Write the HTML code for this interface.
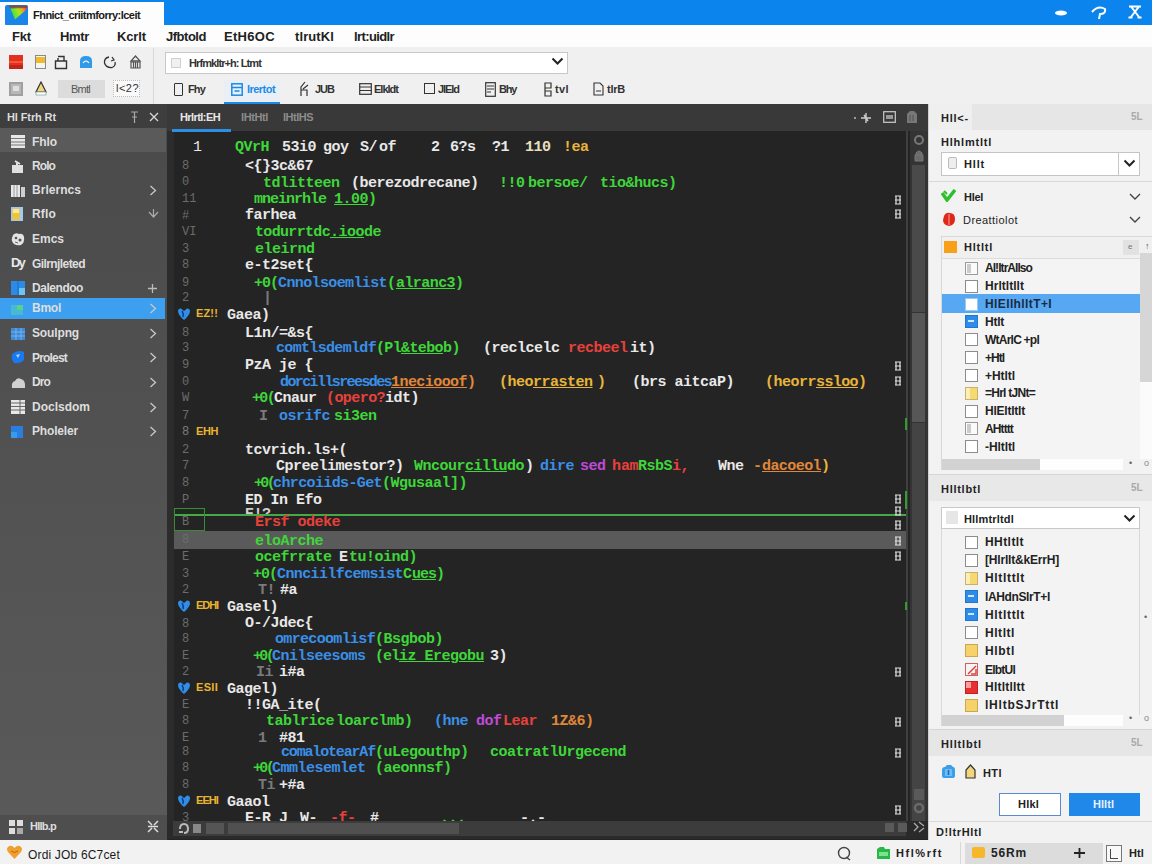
<!DOCTYPE html><html><head><meta charset="utf-8">
<style>
*{margin:0;padding:0;box-sizing:border-box}
html,body{width:1152px;height:864px;overflow:hidden;background:#f0f0f0;font-family:"Liberation Sans",sans-serif}
.a{position:absolute}
.t{position:absolute;white-space:pre;line-height:1}
#title{left:0;top:0;width:1152px;height:25px;background:#0b84ee}
#tab{left:0;top:2px;width:164px;height:23px;background:#fdfdfd}
#menu{left:0;top:25px;width:1152px;height:22px;background:#fdfdfd}
#tool{left:0;top:47px;width:1152px;height:57px;background:#f0f0f0}
#side{left:0;top:104px;width:167px;height:736px;background:linear-gradient(#4a4a4a,#5a5a5a)}
#edit{left:167px;top:104px;width:761px;height:736px;background:#242424}
#right{left:928px;top:104px;width:224px;height:736px;background:#f2f2f2}
#status{left:0;top:840px;width:1152px;height:24px;background:#f2f2f2}
.code{font-family:"Liberation Mono",monospace;font-size:15px;font-weight:bold;letter-spacing:-0.5px}
.side{font-size:12px;font-weight:bold;color:#dedede}
.dk{font-size:12px;font-weight:bold;color:#222}
.g{color:#3fd63a}.w{color:#e8e8e8}.b{color:#3a8fe8}.r{color:#e8413c}.y{color:#e8b53a}.o{color:#e0873a}.p{color:#c04ad8}.n{color:#7a7a7a}.c{color:#e8e0c0}
.u{text-decoration:underline}
</style></head><body>

<div id="title" class="a"></div>
<div id="tab" class="a"></div>
<svg class="a" style="left:5px;top:5px" width="23" height="21" viewBox="0 0 23 21">
<defs><linearGradient id="lg" x1="0" y1="0.3" x2="1" y2="0"><stop offset="0" stop-color="#3ae040"></stop><stop offset="0.45" stop-color="#a8e818"></stop><stop offset="0.7" stop-color="#f0a020"></stop><stop offset="1" stop-color="#e03040"></stop></linearGradient></defs>
<rect x="0" y="0" width="23" height="21" rx="2" fill="#1a84e8"></rect>
<path d="M5 2.5 L22 1.5 L21 5 L10 14.5 Z" fill="url(#lg)"></path>
<path d="M4 0.5 H22.5 L22 3 L5 3.5Z" fill="#8a3a3a" opacity="0.75"></path>
</svg>
<div class="t" style="left: 33px; top: 10px; font-size: 11px; font-weight: bold; color: rgb(26, 26, 26); letter-spacing: -0.53px;">Fhnict_criitmforry:lceit</div>
<svg class="a" style="left:1053px;top:9px" width="16" height="8"><ellipse cx="8" cy="4" rx="6" ry="2.6" fill="#fff"></ellipse></svg>
<svg class="a" style="left:1090px;top:4px" width="18" height="16"><path d="M2 8 Q8 1 15 5 Q16 10 10 10 L9 15" stroke="#fff" stroke-width="2" fill="none"></path></svg>
<svg class="a" style="left:1127px;top:4px" width="16" height="16"><path d="M2 2.5 H14 M4 2.5 L12 13 M12 2.5 L4 13 M1.5 13.5 H5.5 M10.5 13.5 H14.5" stroke="#fff" stroke-width="2" fill="none"></path></svg>
<div id="menu" class="a"></div>
<div class="t dk" style="left: 12px; top: 30px; font-size: 13px; letter-spacing: -0.17px;">Fkt</div>
<div class="t dk" style="left: 60px; top: 30px; font-size: 13px; letter-spacing: -0.34px;">Hmtr</div>
<div class="t dk" style="left: 117px; top: 30px; font-size: 13px; letter-spacing: -0.13px;">Kcrlt</div>
<div class="t dk" style="left: 166px; top: 30px; font-size: 13px; letter-spacing: -0.48px;">Jfbtold</div>
<div class="t dk" style="left: 224px; top: 30px; font-size: 13px; letter-spacing: 0.31px;">EtH6OC</div>
<div class="t dk" style="left: 295px; top: 30px; font-size: 13px; letter-spacing: 0.1px;">tlrutKl</div>
<div class="t dk" style="left: 354px; top: 30px; font-size: 13px; letter-spacing: -0.61px;">lrt:uidlr</div>
<div id="tool" class="a"></div>
<!-- toolbar icons row1 -->
<div class="a" style="left:9px;top:55px;width:14px;height:14px;background:#e2321e;border-bottom:4px solid #c42418"></div>
<div class="a" style="left:9px;top:61px;width:14px;height:2px;background:#f05a3a"></div>
<div class="a" style="left:35px;top:55px;width:11px;height:14px;background:#f4f4f4;border:1px solid #8a8a8a"></div>
<div class="a" style="left:36px;top:57px;width:9px;height:6px;background:#f2b92a"></div>
<svg class="a" style="left:54px;top:55px" width="14" height="15"><path d="M4 1.5 H10 V6 M1.5 6 H12.5 V13.5 H1.5Z M4 6 V3" stroke="#333" stroke-width="1.4" fill="none"></path></svg>
<svg class="a" style="left:79px;top:55px" width="14" height="14"><path d="M1 13 V6 Q1 1 7 1 Q13 1 13 6 V13Z" fill="#2f9ae8"></path><path d="M4 8 Q7 4 10 8" stroke="#fff" stroke-width="1.2" fill="none"></path></svg>
<svg class="a" style="left:103px;top:55px" width="14" height="14"><path d="M6 2 Q1 3 1.5 8 Q3 13 9 12.5 Q13 11 12 7 M9 2 L11 5 L8 6" stroke="#333" stroke-width="1.3" fill="none"></path></svg>
<svg class="a" style="left:129px;top:55px" width="13" height="14"><path d="M6.5 1 L2 6 H11Z" fill="none" stroke="#555" stroke-width="1.3"></path><path d="M2 7 H11 V13 H2Z M4.5 7 V13 M6.5 7 V13 M8.5 7 V13" stroke="#555" stroke-width="1.2" fill="none"></path></svg>
<!-- row2 -->
<div class="a" style="left:9px;top:82px;width:14px;height:14px;background:#b8b8b8;border:2px solid #a0a0a0"></div>
<div class="a" style="left:13px;top:86px;width:6px;height:5px;background:#e0e0e0"></div>
<svg class="a" style="left:35px;top:81px" width="12" height="15"><path d="M6 1 L1 11 H11Z" fill="#f2d67a" stroke="#333" stroke-width="1.2"></path><rect x="1" y="11" width="10" height="3" fill="#fff" stroke="#8aa" stroke-width="0.8"></rect></svg>
<div class="a" style="left:58px;top:80px;width:47px;height:18px;background:#dcdcdc"></div>
<div class="t" style="left: 71px; top: 84px; font-size: 11px; color: rgb(85, 85, 85); letter-spacing: -0.75px;">Bmtl</div>
<div class="a" style="left:113px;top:80px;width:27px;height:17px;background:#fafafa;border:1px dotted #bbb"></div>
<div class="t" style="left: 116px; top: 83px; font-size: 11px; color: rgb(51, 51, 51); letter-spacing: 0.47px;">l&lt;2?</div>
<div class="a" style="left:153px;top:48px;width:1px;height:56px;background:#d8d8d8"></div>
<!-- search -->
<div class="a" style="left:165px;top:52px;width:403px;height:22px;background:#fff;border:1px solid #c8c8c8"></div>
<div class="a" style="left:171px;top:58px;width:10px;height:10px;background:#f0f0f0;border:1px solid #d0d0d0"></div>
<div class="t" style="left: 189px; top: 58px; font-size: 11px; font-weight: bold; color: rgb(51, 51, 51); letter-spacing: -0.91px;">Hrfmkltr+h: Ltmt</div>
<svg class="a" style="left:551px;top:57px" width="13" height="9"><path d="M1.5 1.5 L6.5 6.5 L11.5 1.5" stroke="#222" stroke-width="2" fill="none"></path></svg>
<!-- tabs row -->
<div class="a" style="left:224px;top:80px;width:56px;height:22px;background:#e9eff5"></div>
<div class="a" style="left:224px;top:102px;width:56px;height:2px;background:#1a8ae8"></div>
<div class="a" style="left:174px;top:83px;width:9px;height:13px;border:1.3px solid #333;border-radius:1px"></div>
<div class="t" style="left: 188px; top: 84px; font-size: 11px; color: rgb(51, 51, 51); font-weight: bold; letter-spacing: -0.85px;">Fhy</div>
<svg class="a" style="left:231px;top:83px" width="12" height="13"><rect x="0.8" y="0.8" width="10.4" height="11.4" fill="none" stroke="#1a8ae8" stroke-width="1.5"></rect><path d="M1 4.5 H11 M3.5 8 H8.5" stroke="#1a8ae8" stroke-width="1.4"></path></svg>
<div class="t" style="left: 247px; top: 84px; font-size: 11px; color: rgb(26, 138, 232); font-weight: bold; letter-spacing: -0.54px;">lrertot</div>
<svg class="a" style="left:299px;top:81px" width="11" height="16"><path d="M6 1 L2 6 V15 M9 4 L4 8 M2 9 H8 V15" stroke="#333" stroke-width="1.2" fill="none"></path></svg>
<div class="t" style="left: 315px; top: 84px; font-size: 11px; color: rgb(51, 51, 51); font-weight: bold; letter-spacing: -1.01px;">JUB</div>
<svg class="a" style="left:359px;top:83px" width="13" height="12"><rect x="0.7" y="0.7" width="11.6" height="10.6" fill="none" stroke="#333" stroke-width="1.2"></rect><path d="M1 4 H12 M1 7.5 H12" stroke="#333" stroke-width="1.2"></path></svg>
<div class="t" style="left: 374px; top: 84px; font-size: 11px; color: rgb(51, 51, 51); font-weight: bold; letter-spacing: -0.99px;">Elkldt</div>
<div class="a" style="left:424px;top:83px;width:11px;height:11px;border:1.2px solid #333"></div>
<div class="t" style="left: 438px; top: 84px; font-size: 11px; color: rgb(51, 51, 51); font-weight: bold; letter-spacing: -1.06px;">JlEld</div>
<svg class="a" style="left:485px;top:82px" width="11" height="15"><rect x="0.7" y="0.7" width="9.6" height="13.6" fill="none" stroke="#333" stroke-width="1.2"></rect><path d="M2 4 H9 M2 7 H9 M2 10 H6" stroke="#333" stroke-width="1.1"></path></svg>
<div class="t" style="left: 499px; top: 84px; font-size: 11px; color: rgb(51, 51, 51); font-weight: bold; letter-spacing: -1.26px;">Bhy</div>
<svg class="a" style="left:543px;top:82px" width="10" height="15"><path d="M2 1 H8 V6 H2Z M2 6 V14 H8 V9 H2" stroke="#333" stroke-width="1.2" fill="none"></path></svg>
<div class="t" style="left: 555px; top: 84px; font-size: 11px; color: rgb(51, 51, 51); font-weight: bold; letter-spacing: 0.39px;">tvl</div>
<svg class="a" style="left:593px;top:82px" width="11" height="14"><path d="M1 1 H7 L10 4 V13 H1Z M3 9 H8" stroke="#333" stroke-width="1.1" fill="none"></path></svg>
<div class="t" style="left: 607px; top: 84px; font-size: 11px; color: rgb(51, 51, 51); font-weight: bold; letter-spacing: -0.24px;">tlrB</div>
<div id="side" class="a"></div>
<div class="a" style="left:0;top:104px;width:167px;height:24px;background:#3e3e3e"></div>
<div class="t side" style="left: 7px; top: 112px; font-size: 11px; color: rgb(220, 220, 220); letter-spacing: -0.11px;">Hl Ftrh Rt</div>
<svg class="a" style="left:130px;top:111px" width="9" height="13"><path d="M1 1H8M4.5 1V12M2 6H7" stroke="#aaa" stroke-width="1.2"></path></svg>
<svg class="a" style="left:149px;top:112px" width="10" height="10"><path d="M1 1L9 9M9 1L1 9" stroke="#d8d8d8" stroke-width="1.3"></path></svg>
<div class="a" style="left:0;top:128px;width:166px;height:24px;background:#5a5a5a"></div>
<div class="a" style="left:0;top:298px;width:165px;height:21px;background:#3d9ff0"></div>
<div class="a" style="left:11px;top:134px"><svg width="14" height="13"><rect x="0" y="0" width="14" height="13" fill="#e8e8e8"></rect><path d="M0 3.5H14M0 7H14M0 10H14" stroke="#777" stroke-width="1.2"></path></svg></div>
<div class="t side" style="left: 32px; top: 136px; letter-spacing: -0.08px;">Fhlo</div>
<div class="a" style="left:11px;top:159px"><svg width="13" height="13"><path d="M1 5H12V13H1Z" fill="#e0e0e0"></path><path d="M4 1L9 4M6 3V5" stroke="#e0e0e0" stroke-width="2"></path></svg></div>
<div class="t side" style="left: 32px; top: 160px; letter-spacing: -0.92px;">Rolo</div>
<div class="a" style="left:11px;top:183px"><svg width="14" height="13"><rect x="0" y="1" width="9" height="12" fill="#e8e8e8"></rect><rect x="10" y="3" width="4" height="10" fill="#cfcfcf"></rect><path d="M3 1V13M6 1V13" stroke="#888" stroke-width="0.8"></path></svg></div>
<div class="t side" style="left: 32px; top: 184px; letter-spacing: 0.04px;">Brlerncs</div>
<svg class="a" style="left:149px;top:185px" width="8" height="11"><path d="M1.5 1L6.5 5.5L1.5 10" stroke="#c8c8c8" stroke-width="1.3" fill="none"></path></svg>
<div class="a" style="left:11px;top:207px"><svg width="12" height="14"><rect x="0" y="0" width="12" height="14" fill="#a8c8e8"></rect><rect x="1.5" y="1.5" width="7" height="11" fill="#f2c52a"></rect><rect x="2" y="2" width="6" height="4" fill="#f8e8a0"></rect></svg></div>
<div class="t side" style="left: 32px; top: 208px; letter-spacing: 0.17px;">Rflo</div>
<svg class="a" style="left:148px;top:209px" width="11" height="10"><path d="M1 3L5.5 8L10 3M5.5 0V8" stroke="#aaa" stroke-width="1.2" fill="none"></path></svg>
<div class="a" style="left:11px;top:232px"><svg width="14" height="14"><path d="M2 3Q5 0 8 2Q12 1 13 5Q14 10 10 13Q6 14 3 12Q0 9 1 6Z" fill="#e4e4e4"></path><circle cx="5" cy="6" r="1.3" fill="#555"></circle><circle cx="9" cy="8" r="1.5" fill="#555"></circle><path d="M4 10L7 11" stroke="#666" stroke-width="1"></path></svg></div>
<div class="t side" style="left: 32px; top: 233px; letter-spacing: -0.01px;">Emcs</div>
<div class="a" style="left:11px;top:256px"><div style="font-size:13px;font-weight:bold;color:#e8e8e8;letter-spacing:-2px;line-height:14px">Dy</div></div>
<div class="t side" style="left: 32px; top: 258px; letter-spacing: -0.58px;">Gilrnjleted</div>
<div class="a" style="left:11px;top:281px"><svg width="14" height="14"><rect width="14" height="14" fill="#2a8ce8"></rect><rect x="8" y="7" width="6" height="7" fill="#6cc4f4"></rect><path d="M7 0V14" stroke="#1a6cc0" stroke-width="1"></path></svg></div>
<div class="t side" style="left: 32px; top: 282px; letter-spacing: -0.46px;">Dalendoo</div>
<svg class="a" style="left:147px;top:283px" width="11" height="11"><path d="M5.5 1V10M1 5.5H10" stroke="#bbb" stroke-width="1.3"></path></svg>
<div class="a" style="left:11px;top:301px"><svg width="12" height="10"><rect width="12" height="10" fill="#48c0c8" opacity="0.8"></rect><rect x="6" y="0" width="6" height="5" fill="#5ad08a"></rect></svg></div>
<div class="t side" style="left: 32px; top: 302px; letter-spacing: -0.25px;">Bmol</div>
<svg class="a" style="left:149px;top:303px" width="8" height="11"><path d="M1.5 1L6.5 5.5L1.5 10" stroke="#c8c8c8" stroke-width="1.3" fill="none"></path></svg>
<div class="a" style="left:11px;top:326px"><svg width="14" height="12"><rect width="14" height="12" fill="#3c8ad8"></rect><path d="M0 4H14M0 8H14M5 0V12M10 0V12" stroke="#8ab8e8" stroke-width="0.8"></path></svg></div>
<div class="t side" style="left: 32px; top: 327px; letter-spacing: -0.14px;">Soulpng</div>
<svg class="a" style="left:149px;top:328px" width="8" height="11"><path d="M1.5 1L6.5 5.5L1.5 10" stroke="#c8c8c8" stroke-width="1.3" fill="none"></path></svg>
<div class="a" style="left:11px;top:350px"><svg width="14" height="14"><path d="M1 4Q7 -1 13 2V10Q9 14 3 13Q0 10 1 4Z" fill="#1a78f0"></path><path d="M5 5L9 4L7 8Z" fill="#a8d8ff"></path></svg></div>
<div class="t side" style="left: 32px; top: 352px; letter-spacing: -0.81px;">Prolest</div>
<svg class="a" style="left:149px;top:352px" width="8" height="11"><path d="M1.5 1L6.5 5.5L1.5 10" stroke="#c8c8c8" stroke-width="1.3" fill="none"></path></svg>
<div class="a" style="left:11px;top:375px"><svg width="14" height="12"><path d="M1 11Q0 5 4 4Q6 0 10 2Q14 3 14 8V11Z" fill="#d0d0d0"></path></svg></div>
<div class="t side" style="left: 32px; top: 376px; letter-spacing: -0.89px;">Dro</div>
<svg class="a" style="left:149px;top:377px" width="8" height="11"><path d="M1.5 1L6.5 5.5L1.5 10" stroke="#c8c8c8" stroke-width="1.3" fill="none"></path></svg>
<div class="a" style="left:11px;top:400px"><svg width="14" height="14"><rect width="14" height="14" fill="#e8e8e8"></rect><path d="M0 3H14M0 6.5H14M0 10H14M9 0V14" stroke="#666" stroke-width="1"></path></svg></div>
<div class="t side" style="left: 32px; top: 401px; letter-spacing: 0px;">Doclsdom</div>
<svg class="a" style="left:149px;top:402px" width="8" height="11"><path d="M1.5 1L6.5 5.5L1.5 10" stroke="#c8c8c8" stroke-width="1.3" fill="none"></path></svg>
<div class="a" style="left:11px;top:424px"><svg width="12" height="12"><rect width="12" height="12" fill="#2a7ee0"></rect><rect x="0" y="6" width="6" height="6" fill="#3a9af0"></rect></svg></div>
<div class="t side" style="left: 32px; top: 425px; letter-spacing: -0.17px;">Pholeler</div>
<svg class="a" style="left:149px;top:426px" width="8" height="11"><path d="M1.5 1L6.5 5.5L1.5 10" stroke="#c8c8c8" stroke-width="1.3" fill="none"></path></svg>
<div class="a" style="left:0;top:815px;width:167px;height:25px;background:#4e4e4e"></div>
<svg class="a" style="left:9px;top:820px" width="14" height="14"><rect x="0" y="0" width="6" height="6" fill="#ddd"></rect><rect x="8" y="0" width="6" height="6" fill="#ddd"></rect><rect x="0" y="8" width="6" height="6" fill="#ddd"></rect><rect x="8" y="8" width="6" height="6" fill="#aaa"></rect></svg>
<div class="t side" style="left: 30px; top: 821px; font-size: 11px; letter-spacing: -0.76px;">Hllb.p</div>
<svg class="a" style="left:147px;top:820px" width="12" height="13"><path d="M1 1L5 5M11 1L7 5M1 12L5 8M11 12L7 8M1 6.5H11" stroke="#ddd" stroke-width="1.5"></path></svg>
<div id="edit" class="a"></div>
<div class="a" style="left:167px;top:104px;width:761px;height:27px;background:#393939"></div>
<div class="a" style="left:167px;top:131px;width:7px;height:708px;background:#2c2c2c"></div>
<div class="t" style="left: 180px; top: 112px; font-size: 11px; font-weight: bold; color: rgb(232, 232, 232); letter-spacing: -0.58px;">Hrlrtl:EH</div>
<div class="a" style="left:172px;top:129px;width:59px;height:3px;background:#2d8fe0"></div>
<div class="t" style="left: 241px; top: 112px; font-size: 11px; font-weight: bold; color: rgb(140, 140, 140); letter-spacing: -0.39px;">lHtHtl</div>
<div class="t" style="left: 283px; top: 112px; font-size: 11px; font-weight: bold; color: rgb(140, 140, 140); letter-spacing: -0.5px;">lHtlHS</div>
<svg class="a" style="left:853px;top:112px" width="20" height="12"><circle cx="2" cy="6" r="1" fill="#bbb"></circle><path d="M8 6H18M13 1V11M11 3L15 9" stroke="#ccc" stroke-width="1.4"></path></svg>
<svg class="a" style="left:883px;top:111px" width="13" height="12"><rect x="0.7" y="0.7" width="11.6" height="10.6" fill="none" stroke="#ccc" stroke-width="1.2"></rect><rect x="3" y="4" width="7" height="4" fill="#999"></rect></svg>
<svg class="a" style="left:906px;top:110px" width="12" height="14"><path d="M1 13V4L4 1H8L11 4V13Z" fill="#777"></path><path d="M4 5V11M7 5V11" stroke="#555" stroke-width="1"></path></svg>
<div class="a" style="left:174px;top:531px;width:732px;height:18px;background:#5a5a5a"></div>
<div class="a" style="left:174px;top:514px;width:732px;height:1.5px;background:#46a846"></div>
<div class="a" style="left:174px;top:508px;width:31px;height:6px;background:#1e2a1e"></div>
<div class="a" style="left:174px;top:508px;width:31px;height:23px;border:1px solid #3a8a3a"></div>
<div class="a" style="left:906px;top:131px;width:1.5px;height:690px;background:#404040"></div>
<div class="a" style="left:905px;top:418px;width:2px;height:12px;background:#2fa02f"></div>
<div class="a" style="left:905px;top:491px;width:2px;height:18px;background:#2fa02f"></div>
<div class="a" style="left:905px;top:602px;width:2px;height:8px;background:#2fa02f"></div>
<div class="a" style="left:910px;top:131px;width:18px;height:708px;background:#343434"></div>
<div class="a" style="left:912px;top:165px;width:13px;height:147px;background:#4a4a4a"></div>
<div class="a" style="left:912px;top:312px;width:13px;height:111px;background:#575757;border-top:1px solid #333;border-bottom:1px solid #333"></div>
<div class="a" style="left:912px;top:423px;width:13px;height:398px;background:#444"></div>
<svg class="a" style="left:913px;top:134px" width="12" height="12"><circle cx="6" cy="6" r="4" fill="none" stroke="#777" stroke-width="2"></circle></svg>
<svg class="a" style="left:913px;top:149px" width="12" height="13"><path d="M3 6V4Q6 0 9 4V6M2 6H10V12H2Z" fill="#6a6a6a" stroke="#777" stroke-width="1"></path></svg>
<svg class="a" style="left:913px;top:788px" width="12" height="13"><rect x="1" y="1" width="10" height="11" fill="#5a5a5a"></rect></svg>
<svg class="a" style="left:913px;top:802px" width="12" height="12"><circle cx="6" cy="6" r="4" fill="none" stroke="#6a6a6a" stroke-width="2.5"></circle></svg>
<div class="t code w" style="left:193px;top:140px;font-weight:normal">1</div>
<div class="t code g" style="left:235px;top:140px;letter-spacing:-0.50px">QVrH</div>
<div class="t code w" style="left:282px;top:140px;letter-spacing:-0.50px">53i0</div>
<div class="t code w" style="left:323px;top:140px;letter-spacing:-0.50px">goy</div>
<div class="t code w" style="left:360px;top:140px;letter-spacing:-0.50px">S/</div>
<div class="t code w" style="left:379px;top:140px;letter-spacing:-0.50px">of</div>
<div class="t code w" style="left:431px;top:140px;letter-spacing:-0.50px">2</div>
<div class="t code w" style="left:450px;top:140px;letter-spacing:-0.50px">6?s</div>
<div class="t code w" style="left:492px;top:140px;letter-spacing:-0.50px">?1</div>
<div class="t code c" style="left:525px;top:140px;letter-spacing:-0.50px">110</div>
<div class="t code y" style="left:563px;top:140px;letter-spacing:-0.50px">!ea</div>
<div class="t" style="left:182px;top:160px;font-family:'Liberation Mono',monospace;font-size:12px;color:#6c6c6c">8</div>
<div class="t code w" style="left:245px;top:159px;letter-spacing:-0.50px">&lt;{}3c&amp;67</div>
<div class="t" style="left:182px;top:176px;font-family:'Liberation Mono',monospace;font-size:12px;color:#6c6c6c">0</div>
<div class="t code g" style="left:263px;top:176px;letter-spacing:-0.50px">tdlitteen</div>
<div class="t code w" style="left:351px;top:176px;letter-spacing:-0.50px">(berezodrecane)</div>
<div class="t code g" style="left:499px;top:176px;letter-spacing:-0.50px">!!0</div>
<div class="t code g" style="left:528px;top:176px;letter-spacing:-0.50px">bersoe/</div>
<div class="t code g" style="left:600px;top:176px;letter-spacing:-0.50px">tio&amp;hucs)</div>
<div class="t" style="left:182px;top:193px;font-family:'Liberation Mono',monospace;font-size:12px;color:#6c6c6c">11</div>
<div class="t code g" style="left:254px;top:192px;letter-spacing:-1.00px">mneinrhle </div>
<div class="t code g u" style="left:334px;top:192px;letter-spacing:-0.50px">1.00</div>
<div class="t code g" style="left:368px;top:192px;letter-spacing:-0.50px">)</div>
<div class="t" style="left:182px;top:210px;font-family:'Liberation Mono',monospace;font-size:12px;color:#6c6c6c">#</div>
<div class="t code w" style="left:245px;top:208px;letter-spacing:-0.50px">farhea</div>
<div class="t" style="left:182px;top:226px;font-family:'Liberation Mono',monospace;font-size:12px;color:#6c6c6c">VI</div>
<div class="t code g" style="left:255px;top:225px;letter-spacing:-0.67px">todurrtdc</div>
<div class="t code g u" style="left:330px;top:225px;letter-spacing:-0.50px">.ioo</div>
<div class="t code g" style="left:364px;top:225px;letter-spacing:-0.50px">de</div>
<div class="t" style="left:182px;top:243px;font-family:'Liberation Mono',monospace;font-size:12px;color:#6c6c6c">3</div>
<div class="t code g" style="left:255px;top:242px;letter-spacing:-0.50px">eleirnd</div>
<div class="t" style="left:182px;top:259px;font-family:'Liberation Mono',monospace;font-size:12px;color:#6c6c6c">8</div>
<div class="t code w" style="left:245px;top:258px;letter-spacing:-0.50px">e-t2set{</div>
<div class="t" style="left:182px;top:277px;font-family:'Liberation Mono',monospace;font-size:12px;color:#6c6c6c">9</div>
<div class="t code g" style="left:254px;top:276px;letter-spacing:-1.00px">+0(</div>
<div class="t code b" style="left:278px;top:276px;letter-spacing:-0.62px">Cnnolsoemlist</div>
<div class="t code g" style="left:387px;top:276px;letter-spacing:-0.50px">(</div>
<div class="t code g u" style="left:396px;top:276px;letter-spacing:-0.57px">alranc3</div>
<div class="t code g" style="left:455px;top:276px;letter-spacing:-0.50px">)</div>
<div class="t" style="left:182px;top:292px;font-family:'Liberation Mono',monospace;font-size:12px;color:#6c6c6c">2</div>
<div class="t code n" style="left:263px;top:291px;letter-spacing:-0.50px">|</div>
<div class="t code w" style="left:227px;top:308px;letter-spacing:-0.50px">Gaea)</div>
<div class="t" style="left:182px;top:327px;font-family:'Liberation Mono',monospace;font-size:12px;color:#6c6c6c">8</div>
<div class="t code w" style="left:245px;top:326px;letter-spacing:-0.50px">L1n/=&amp;s{</div>
<div class="t" style="left:182px;top:342px;font-family:'Liberation Mono',monospace;font-size:12px;color:#6c6c6c">3</div>
<div class="t code b" style="left:276px;top:341px;letter-spacing:-0.67px">comtlsdemldf</div>
<div class="t code g" style="left:376px;top:341px;letter-spacing:-0.67px">(Pl</div>
<div class="t code g u" style="left:401px;top:341px;letter-spacing:-0.60px">&amp;tebo</div>
<div class="t code g" style="left:443px;top:341px;letter-spacing:-0.50px">b)</div>
<div class="t code w" style="left:483px;top:341px;letter-spacing:-0.50px">(reclcelc</div>
<div class="t code r" style="left:568px;top:341px;letter-spacing:-0.50px">recbeel</div>
<div class="t code w" style="left:630px;top:341px;letter-spacing:-0.50px">it)</div>
<div class="t" style="left:182px;top:359px;font-family:'Liberation Mono',monospace;font-size:12px;color:#6c6c6c">9</div>
<div class="t code w" style="left:245px;top:358px;letter-spacing:-0.50px">PzA je {</div>
<div class="t" style="left:182px;top:376px;font-family:'Liberation Mono',monospace;font-size:12px;color:#6c6c6c">0</div>
<div class="t code b" style="left:280px;top:375px;letter-spacing:-1.60px">dorcillsreesdes</div>
<div class="t code o u" style="left:391px;top:375px;letter-spacing:-0.56px">1neciooof</div>
<div class="t code o" style="left:467px;top:375px;letter-spacing:-0.50px">)</div>
<div class="t code y" style="left:499px;top:375px;letter-spacing:-0.50px">(heo</div>
<div class="t code y u" style="left:533px;top:375px;letter-spacing:-0.50px">rrasten</div>
<div class="t code y" style="left:597px;top:375px;letter-spacing:-0.50px">)</div>
<div class="t code w" style="left:632px;top:375px;letter-spacing:-0.50px">(brs aitcaP)</div>
<div class="t code y" style="left:765px;top:375px;letter-spacing:-0.50px">(heorr</div>
<div class="t code y u" style="left:816px;top:375px;letter-spacing:-0.60px">ssloo</div>
<div class="t code y" style="left:858px;top:375px;letter-spacing:-0.50px">)</div>
<div class="t" style="left:182px;top:392px;font-family:'Liberation Mono',monospace;font-size:12px;color:#6c6c6c">W</div>
<div class="t code g" style="left:252px;top:391px;letter-spacing:-1.67px">+0(</div>
<div class="t code w" style="left:274px;top:391px;letter-spacing:-0.50px">Cnaur</div>
<div class="t code r" style="left:326px;top:391px;letter-spacing:-0.57px">(opero?</div>
<div class="t code w" style="left:385px;top:391px;letter-spacing:-0.50px">idt)</div>
<div class="t" style="left:182px;top:410px;font-family:'Liberation Mono',monospace;font-size:12px;color:#6c6c6c">7</div>
<div class="t code n" style="left:259px;top:409px;letter-spacing:-0.50px">I</div>
<div class="t code b" style="left:279px;top:409px;letter-spacing:-0.50px">osrifc</div>
<div class="t code g" style="left:334px;top:409px;letter-spacing:-0.50px">si3en</div>
<div class="t" style="left:182px;top:444px;font-family:'Liberation Mono',monospace;font-size:12px;color:#6c6c6c">2</div>
<div class="t code w" style="left:245px;top:443px;letter-spacing:-0.50px">tcvrich.ls+(</div>
<div class="t" style="left:182px;top:460px;font-family:'Liberation Mono',monospace;font-size:12px;color:#6c6c6c">7</div>
<div class="t code w" style="left:276px;top:459px;letter-spacing:-0.50px">Cpreelimestor?)</div>
<div class="t code g" style="left:414px;top:459px;letter-spacing:-0.50px">Wncour</div>
<div class="t code g u" style="left:465px;top:459px;letter-spacing:-0.60px">cillu</div>
<div class="t code g" style="left:507px;top:459px;letter-spacing:-0.50px">do</div>
<div class="t code w" style="left:525px;top:459px;letter-spacing:-0.50px">)</div>
<div class="t code b" style="left:540px;top:459px;letter-spacing:-0.50px">dire</div>
<div class="t code p" style="left:580px;top:459px;letter-spacing:-0.50px">sed</div>
<div class="t code r" style="left:612px;top:459px;letter-spacing:-0.50px">h</div>
<div class="t code r" style="left:621px;top:459px;letter-spacing:-0.50px">am</div>
<div class="t code g" style="left:638px;top:459px;letter-spacing:-0.50px">RsbS</div>
<div class="t code r" style="left:672px;top:459px;letter-spacing:-0.50px">i,</div>
<div class="t code w" style="left:718px;top:459px;letter-spacing:-0.50px">Wne</div>
<div class="t code o" style="left:753px;top:459px;letter-spacing:-0.50px">-</div>
<div class="t code o u" style="left:762px;top:459px;letter-spacing:-0.57px">dacoeol</div>
<div class="t code y" style="left:821px;top:459px;letter-spacing:-0.50px">)</div>
<div class="t" style="left:182px;top:477px;font-family:'Liberation Mono',monospace;font-size:12px;color:#6c6c6c">8</div>
<div class="t code g" style="left:254px;top:476px;letter-spacing:-2.67px">+0(</div>
<div class="t code b" style="left:273px;top:476px;letter-spacing:-0.62px">chrcoiids-Get</div>
<div class="t code g" style="left:382px;top:476px;letter-spacing:-0.50px">(Wgusaal])</div>
<div class="t" style="left:182px;top:494px;font-family:'Liberation Mono',monospace;font-size:12px;color:#6c6c6c">P</div>
<div class="t code w" style="left:245px;top:493px;letter-spacing:-0.50px">ED In Efo</div>
<div class="a" style="left:240px;top:506px;width:40px;height:8px;overflow:hidden"><div class="t code w" style="left:5px;top:1px;letter-spacing:-0.50px;color:#cfcfcf">E!?</div></div>
<div class="t" style="left:182px;top:516px;font-family:'Liberation Mono',monospace;font-size:12px;color:#6c6c6c">B</div>
<div class="t code r" style="left:255px;top:515px;letter-spacing:-0.50px">Ersf odeke</div>
<div class="t" style="left:182px;top:534px;font-family:'Liberation Mono',monospace;font-size:12px;color:#6c6c6c">8</div>
<div class="t code g" style="left:255px;top:534px;letter-spacing:-0.50px">eloArche</div>
<div class="t" style="left:182px;top:551px;font-family:'Liberation Mono',monospace;font-size:12px;color:#6c6c6c">E</div>
<div class="t code g" style="left:255px;top:550px;letter-spacing:-0.50px">ocefrrate</div>
<div class="t code w" style="left:339px;top:550px;letter-spacing:-0.50px">E</div>
<div class="t code g" style="left:349px;top:550px;letter-spacing:-0.50px">tu!oind)</div>
<div class="t" style="left:182px;top:568px;font-family:'Liberation Mono',monospace;font-size:12px;color:#6c6c6c">3</div>
<div class="t code g" style="left:253px;top:567px;letter-spacing:-1.00px">+0(</div>
<div class="t code b" style="left:277px;top:567px;letter-spacing:-0.60px">Cnnciilfcemsist</div>
<div class="t code g" style="left:403px;top:567px;letter-spacing:-0.50px">C</div>
<div class="t code g u" style="left:412px;top:567px;letter-spacing:-1.00px">ues</div>
<div class="t code g" style="left:436px;top:567px;letter-spacing:-0.50px">)</div>
<div class="t" style="left:182px;top:584px;font-family:'Liberation Mono',monospace;font-size:12px;color:#6c6c6c">2</div>
<div class="t code n" style="left:258px;top:583px;letter-spacing:-0.50px">T!</div>
<div class="t code w" style="left:280px;top:583px;letter-spacing:-0.50px">#a</div>
<div class="t code w" style="left:227px;top:600px;letter-spacing:-0.50px">Gasel)</div>
<div class="t" style="left:182px;top:618px;font-family:'Liberation Mono',monospace;font-size:12px;color:#6c6c6c">8</div>
<div class="t code w" style="left:245px;top:616px;letter-spacing:-0.50px">O-/Jdec{</div>
<div class="t" style="left:182px;top:633px;font-family:'Liberation Mono',monospace;font-size:12px;color:#6c6c6c">8</div>
<div class="t code b" style="left:275px;top:632px;letter-spacing:-0.67px">omrecoomlisf</div>
<div class="t code g" style="left:375px;top:632px;letter-spacing:-0.50px">(Bsgbob)</div>
<div class="t" style="left:182px;top:650px;font-family:'Liberation Mono',monospace;font-size:12px;color:#6c6c6c">E</div>
<div class="t code g" style="left:253px;top:649px;letter-spacing:-2.67px">+0(</div>
<div class="t code b" style="left:272px;top:649px;letter-spacing:-0.50px">Cnilseesoms</div>
<div class="t code g" style="left:375px;top:649px;letter-spacing:-1.00px">(el</div>
<div class="t code g u" style="left:399px;top:649px;letter-spacing:-0.50px">iz Eregobu</div>
<div class="t code w" style="left:490px;top:649px;letter-spacing:-0.50px">3)</div>
<div class="t" style="left:182px;top:666px;font-family:'Liberation Mono',monospace;font-size:12px;color:#6c6c6c">2</div>
<div class="t code n" style="left:256px;top:665px;letter-spacing:-0.50px">Ii</div>
<div class="t code w" style="left:279px;top:665px;letter-spacing:-0.50px">i#a</div>
<div class="t code w" style="left:227px;top:682px;letter-spacing:-0.50px">Gagel)</div>
<div class="t" style="left:182px;top:699px;font-family:'Liberation Mono',monospace;font-size:12px;color:#6c6c6c">E</div>
<div class="t code w" style="left:245px;top:698px;letter-spacing:-0.50px">!!GA_ite(</div>
<div class="t" style="left:182px;top:715px;font-family:'Liberation Mono',monospace;font-size:12px;color:#6c6c6c">8</div>
<div class="t code g" style="left:266px;top:714px;letter-spacing:-0.50px">tablrice</div>
<div class="t code g" style="left:336px;top:714px;letter-spacing:-0.50px">loarclmb)</div>
<div class="t code b" style="left:434px;top:714px;letter-spacing:-0.50px">(hne</div>
<div class="t code p" style="left:476px;top:714px;letter-spacing:-0.50px">dof</div>
<div class="t code r" style="left:503px;top:714px;letter-spacing:-0.50px">Lear</div>
<div class="t code o" style="left:551px;top:714px;letter-spacing:-0.50px">1Z&amp;6)</div>
<div class="t" style="left:182px;top:732px;font-family:'Liberation Mono',monospace;font-size:12px;color:#6c6c6c">E</div>
<div class="t code n" style="left:258px;top:731px;letter-spacing:-0.50px">1</div>
<div class="t code w" style="left:279px;top:731px;letter-spacing:-0.50px">#81</div>
<div class="t" style="left:182px;top:746px;font-family:'Liberation Mono',monospace;font-size:12px;color:#6c6c6c">8</div>
<div class="t code b" style="left:281px;top:745px;letter-spacing:-1.17px">comalotearAf</div>
<div class="t code g" style="left:375px;top:745px;letter-spacing:-0.50px">(uLegouthp)</div>
<div class="t code g" style="left:490px;top:745px;letter-spacing:-0.50px">coatratlUrgecend</div>
<div class="t" style="left:182px;top:762px;font-family:'Liberation Mono',monospace;font-size:12px;color:#6c6c6c">8</div>
<div class="t code g" style="left:253px;top:761px;letter-spacing:-2.67px">+0(</div>
<div class="t code b" style="left:272px;top:761px;letter-spacing:-0.50px">Cmmlesemlet</div>
<div class="t code g" style="left:375px;top:761px;letter-spacing:-0.50px">(aeonnsf)</div>
<div class="t" style="left:182px;top:779px;font-family:'Liberation Mono',monospace;font-size:12px;color:#6c6c6c">8</div>
<div class="t code n" style="left:258px;top:778px;letter-spacing:-0.50px">Ti</div>
<div class="t code w" style="left:279px;top:778px;letter-spacing:-0.50px">+#a</div>
<div class="t code w" style="left:227px;top:795px;letter-spacing:-0.50px">Gaaol</div>
<div class="t" style="left:182px;top:812px;font-family:'Liberation Mono',monospace;font-size:12px;color:#6c6c6c">3</div>
<div class="t code w" style="left:245px;top:811px;letter-spacing:-0.50px">E-R J</div>
<div class="t code w" style="left:300px;top:811px;letter-spacing:-0.50px">W-</div>
<div class="t code r" style="left:330px;top:811px;letter-spacing:-0.50px">-f-</div>
<div class="t code w" style="left:370px;top:811px;letter-spacing:-0.50px">#</div>
<div class="t code g" style="left:440px;top:811px;letter-spacing:-0.50px">...</div>
<div class="t code w" style="left:520px;top:811px;letter-spacing:-0.50px">-.-</div>
<svg class="a" style="left:177px;top:308px" width="14" height="12"><path d="M1 3Q1 0 4 0.5L7 3L10 0.5Q13 0 13 3Q13 7 7 12Q1 7 1 3Z" fill="#2f8ee8"></path><path d="M5 3Q7 6 6 9" stroke="#0d3d80" stroke-width="1.5" fill="none"></path></svg>
<div class="t" style="left: 196px; top: 308px; font-size: 11px; font-weight: bold; color: rgb(232, 181, 48); letter-spacing: 0.15px;">EZ!!</div>
<div class="t" style="left:182px;top:426px;font-family:'Liberation Mono',monospace;font-size:12px;color:#7c7c7c">8</div>
<div class="t" style="left: 196px; top: 426px; font-size: 11px; font-weight: bold; color: rgb(232, 181, 48); letter-spacing: -0.41px;">EHH</div>
<svg class="a" style="left:177px;top:600px" width="14" height="12"><path d="M1 3Q1 0 4 0.5L7 3L10 0.5Q13 0 13 3Q13 7 7 12Q1 7 1 3Z" fill="#2f8ee8"></path><path d="M5 3Q7 6 6 9" stroke="#0d3d80" stroke-width="1.5" fill="none"></path></svg>
<div class="t" style="left: 196px; top: 600px; font-size: 11px; font-weight: bold; color: rgb(232, 181, 48); letter-spacing: -1.07px;">EDHI</div>
<svg class="a" style="left:177px;top:682px" width="14" height="12"><path d="M1 3Q1 0 4 0.5L7 3L10 0.5Q13 0 13 3Q13 7 7 12Q1 7 1 3Z" fill="#2f8ee8"></path><path d="M5 3Q7 6 6 9" stroke="#0d3d80" stroke-width="1.5" fill="none"></path></svg>
<div class="t" style="left: 196px; top: 682px; font-size: 11px; font-weight: bold; color: rgb(232, 181, 48); letter-spacing: 0.3px;">ESII</div>
<svg class="a" style="left:177px;top:795px" width="14" height="12"><path d="M1 3Q1 0 4 0.5L7 3L10 0.5Q13 0 13 3Q13 7 7 12Q1 7 1 3Z" fill="#2f8ee8"></path><path d="M5 3Q7 6 6 9" stroke="#0d3d80" stroke-width="1.5" fill="none"></path></svg>
<div class="t" style="left: 196px; top: 795px; font-size: 11px; font-weight: bold; color: rgb(232, 181, 48); letter-spacing: -0.92px;">EEHI</div>
<svg class="a" style="left:894px;top:195px" width="8" height="10"><path d="M1 1H7M1 5H7M1 9H7M2 1V9M6 1V9" stroke="#e0e0e0" stroke-width="1.2"></path></svg>
<svg class="a" style="left:894px;top:209px" width="8" height="10"><path d="M1 1H7M1 5H7M1 9H7M2 1V9M6 1V9" stroke="#e0e0e0" stroke-width="1.2"></path></svg>
<svg class="a" style="left:894px;top:361px" width="8" height="10"><path d="M1 1H7M1 5H7M1 9H7M2 1V9M6 1V9" stroke="#e0e0e0" stroke-width="1.2"></path></svg>
<svg class="a" style="left:894px;top:376px" width="8" height="10"><path d="M1 1H7M1 5H7M1 9H7M2 1V9M6 1V9" stroke="#e0e0e0" stroke-width="1.2"></path></svg>
<svg class="a" style="left:894px;top:494px" width="8" height="10"><path d="M1 1H7M1 5H7M1 9H7M2 1V9M6 1V9" stroke="#e0e0e0" stroke-width="1.2"></path></svg>
<svg class="a" style="left:894px;top:506px" width="8" height="10"><path d="M1 1H7M1 5H7M1 9H7M2 1V9M6 1V9" stroke="#e0e0e0" stroke-width="1.2"></path></svg>
<svg class="a" style="left:894px;top:520px" width="8" height="10"><path d="M1 1H7M1 5H7M1 9H7M2 1V9M6 1V9" stroke="#e0e0e0" stroke-width="1.2"></path></svg>
<svg class="a" style="left:894px;top:536px" width="8" height="10"><path d="M1 1H7M1 5H7M1 9H7M2 1V9M6 1V9" stroke="#e0e0e0" stroke-width="1.2"></path></svg>
<svg class="a" style="left:894px;top:551px" width="8" height="10"><path d="M1 1H7M1 5H7M1 9H7M2 1V9M6 1V9" stroke="#e0e0e0" stroke-width="1.2"></path></svg>
<svg class="a" style="left:894px;top:667px" width="8" height="10"><path d="M1 1H7M1 5H7M1 9H7M2 1V9M6 1V9" stroke="#e0e0e0" stroke-width="1.2"></path></svg>
<svg class="a" style="left:894px;top:717px" width="8" height="10"><path d="M1 1H7M1 5H7M1 9H7M2 1V9M6 1V9" stroke="#e0e0e0" stroke-width="1.2"></path></svg>
<svg class="a" style="left:894px;top:748px" width="8" height="10"><path d="M1 1H7M1 5H7M1 9H7M2 1V9M6 1V9" stroke="#e0e0e0" stroke-width="1.2"></path></svg>
<svg class="a" style="left:894px;top:805px" width="8" height="10"><path d="M1 1H7M1 5H7M1 9H7M2 1V9M6 1V9" stroke="#e0e0e0" stroke-width="1.2"></path></svg>
<div class="a" style="left:167px;top:821px;width:761px;height:18px;background:#2a2a2a"></div>
<div class="a" style="left:173px;top:821px;width:733px;height:15px;background:#3c3c3c"></div>
<svg class="a" style="left:178px;top:823px" width="12" height="11"><path d="M2 6Q2 1 6 1Q10 1 10 6Q10 10 6 10" stroke="#bbb" stroke-width="2" fill="none"></path><path d="M1 9H5" stroke="#bbb" stroke-width="2"></path></svg>
<div class="a" style="left:193px;top:824px;width:8px;height:9px;background:#888"></div>
<div class="a" style="left:206px;top:823px;width:18px;height:11px;background:#555"></div>
<div class="a" style="left:228px;top:823px;width:231px;height:11px;background:#505050"></div>
<div class="a" style="left:885px;top:823px;width:9px;height:9px;background:#5a5a5a"></div>
<div class="a" style="left:898px;top:823px;width:9px;height:9px;background:#5a5a5a"></div>
<svg class="a" style="left:912px;top:820px" width="14" height="14"><path d="M2 3L6 7L2 11M7 2L12 6M7 12L12 8" stroke="#aaa" stroke-width="1.3" fill="none"></path></svg>
<div id="right" class="a"></div>
<div class="a" style="left:928px;top:104px;width:1px;height:736px;background:#d0d0d0"></div>
<div class="a" style="left:929px;top:104px;width:223px;height:26px;background:#e6e6e6"></div>
<div class="a" style="left:929px;top:104px;width:43px;height:26px;background:#efefef"></div>
<div class="t dk" style="left: 941px; top: 113px; font-size: 11px; letter-spacing: 0.77px;">Hll&lt;-</div>
<div class="t" style="left:1131px;top:112px;font-size:10px;color:#aaa;font-weight:bold">5L</div>
<div class="t dk" style="left: 941px; top: 137px; font-size: 11px; letter-spacing: 0.78px;">Hlhlmtltl</div>
<div class="a" style="left:941px;top:152px;width:199px;height:24px;background:#fff;border:1px solid #c4c4c4"></div>
<div class="a" style="left:1118px;top:153px;width:1px;height:22px;background:#c8c8c8"></div>
<div class="a" style="left:948px;top:157px;width:9px;height:12px;background:#eee;border:1px solid #bbb;border-radius:2px"></div>
<div class="t dk" style="left: 964px; top: 159px; font-size: 11px; letter-spacing: 0.82px;">Hllt</div>
<svg class="a" style="left:1123px;top:159px" width="13" height="9"><path d="M1.5 1.5L6.5 6.5L11.5 1.5" stroke="#222" stroke-width="2" fill="none"></path></svg>
<div class="a" style="left:929px;top:181px;width:223px;height:1px;background:#d8d8d8"></div>
<svg class="a" style="left:941px;top:189px" width="15" height="13"><path d="M1 4L6 11L14 1" stroke="#2cc02c" stroke-width="3.5" fill="none"></path><path d="M3 2L6 5" stroke="#2cc02c" stroke-width="2"></path></svg>
<div class="t dk" style="left: 964px; top: 192px; font-size: 11px; letter-spacing: -0.3px;">Hlel</div>
<svg class="a" style="left:1129px;top:193px" width="12" height="8"><path d="M1 1L6 6L11 1" stroke="#444" stroke-width="1.4" fill="none"></path></svg>
<svg class="a" style="left:942px;top:212px" width="14" height="15"><path d="M2 4Q4 0 8 1Q13 1 13 7Q13 13 7 14Q1 13 1 8Z" fill="#e02818"></path><path d="M7 2V13" stroke="#f6a0a0" stroke-width="1"></path></svg>
<div class="t dk" style="left: 963px; top: 215px; font-size: 11px; font-weight: normal; color: rgb(34, 34, 34); letter-spacing: 0.44px;">Dreattiolot</div>
<svg class="a" style="left:1129px;top:216px" width="12" height="8"><path d="M1 1L6 6L11 1" stroke="#444" stroke-width="1.4" fill="none"></path></svg>
<div class="a" style="left:941px;top:236px;width:211px;height:1px;background:#d8d8d8"></div>
<div class="a" style="left:941px;top:236px;width:1px;height:234px;background:#d8d8d8"></div>
<div class="a" style="left:942px;top:237px;width:210px;height:21px;background:#f0f0f0"></div>
<div class="a" style="left:944px;top:241px;width:13px;height:12px;background:#f8a01a"></div>
<div class="t dk" style="left: 964px; top: 242px; font-size: 11px; letter-spacing: 0.76px;">Hltltl</div>
<div class="a" style="left:1123px;top:240px;width:16px;height:15px;background:#e2e2e2"></div>
<div class="t" style="left:1128px;top:243px;font-size:8px;color:#777">e</div>
<div class="t" style="left:1145px;top:242px;font-size:9px;color:#555">↑</div>
<div class="a" style="left:942px;top:258px;width:198px;height:1px;background:#dcdcdc"></div>
<div class="a" style="left:942px;top:259px;width:198px;height:200px;background:#f4f4f4"></div>
<div class="a" style="left:1140px;top:253px;width:12px;height:129px;background:#d6d6d6"></div>
<div class="a" style="left:1140px;top:382px;width:12px;height:77px;background:#fbfbfb"></div>
<div class="a" style="left:942px;top:294px;width:198px;height:19px;background:#56a8f2"></div>
<div class="a" style="left:942px;top:459px;width:98px;height:11px;background:#d2d2d2"></div>
<div class="a" style="left:1040px;top:459px;width:83px;height:11px;background:#fdfdfd"></div>
<div class="t" style="left:1129px;top:459px;font-size:9px;color:#666">•</div>
<div class="t" style="left:1144px;top:459px;font-size:9px;color:#888">o</div>
<div class="a" style="left:965px;top:262px;width:13px;height:13px;background:#fafafa;border:1px solid #9a9a9a"></div><div class="a" style="left:967px;top:264px;width:4px;height:9px;background:#ccc"></div><div class="t dk" style="left: 985px; top: 262px; font-size: 12px; color: rgb(34, 34, 34); letter-spacing: -0.94px;">Al!ltrAllso</div>
<div class="a" style="left:965px;top:280px;width:13px;height:13px;background:#fff;border:1px solid #8c8c8c"></div><div class="t dk" style="left: 985px; top: 280px; font-size: 12px; color: rgb(34, 34, 34); letter-spacing: 0.04px;">Hrltltllt</div>
<div class="a" style="left:965px;top:298px;width:13px;height:13px;background:#fff;border:1px solid #9cc8f0"></div><div class="t dk" style="left: 985px; top: 298px; font-size: 12px; color: rgb(26, 42, 64); letter-spacing: 0.39px;">HlEllhlltT+I</div>
<div class="a" style="left:965px;top:315px;width:13px;height:13px;background:#2e8ce8;border:1px solid #1f78d0"></div><div class="a" style="left:968px;top:320px;width:6px;height:2px;background:#cfe6ff"></div><div class="t dk" style="left: 985px; top: 316px; font-size: 12px; color: rgb(34, 34, 34); letter-spacing: -0.25px;">Htlt</div>
<div class="a" style="left:965px;top:333px;width:13px;height:13px;background:#fff;border:1px solid #8c8c8c"></div><div class="t dk" style="left: 985px; top: 334px; font-size: 12px; color: rgb(34, 34, 34); letter-spacing: -0.77px;">WtArlC +pl</div>
<div class="a" style="left:965px;top:351px;width:13px;height:13px;background:#fff;border:1px solid #8c8c8c"></div><div class="t dk" style="left: 985px; top: 352px; font-size: 12px; color: rgb(34, 34, 34); letter-spacing: -1px;">+Htl</div>
<div class="a" style="left:965px;top:369px;width:13px;height:13px;background:#fff;border:1px solid #8c8c8c"></div><div class="t dk" style="left: 985px; top: 370px; font-size: 12px; color: rgb(34, 34, 34); letter-spacing: -0.06px;">+Htltl</div>
<div class="a" style="left:965px;top:387px;width:13px;height:13px;background:#fbefb8;border:1px solid #c9b070"></div><div class="a" style="left:970px;top:388px;width:7px;height:11px;background:#f6da70"></div><div class="t dk" style="left: 985px; top: 387px; font-size: 12px; color: rgb(34, 34, 34); letter-spacing: -0.74px;">=Hrl tJNt=</div>
<div class="a" style="left:965px;top:405px;width:13px;height:13px;background:#fff;border:1px solid #8c8c8c"></div><div class="t dk" style="left: 985px; top: 405px; font-size: 12px; color: rgb(34, 34, 34); letter-spacing: -0.22px;">HlEltltlt</div>
<div class="a" style="left:965px;top:422px;width:13px;height:13px;background:#fafafa;border:1px solid #9a9a9a"></div><div class="a" style="left:967px;top:424px;width:4px;height:9px;background:#ccc"></div><div class="t dk" style="left: 985px; top: 423px; font-size: 12px; color: rgb(34, 34, 34); letter-spacing: -0.89px;">AHtttt</div>
<div class="a" style="left:965px;top:440px;width:13px;height:13px;background:#fff;border:1px solid #8c8c8c"></div><div class="t dk" style="left: 985px; top: 441px; font-size: 12px; color: rgb(34, 34, 34); letter-spacing: -0.09px;">-Hltltl</div>

<div class="a" style="left:929px;top:474px;width:223px;height:1px;background:#d6d6d6"></div>
<div class="a" style="left:929px;top:475px;width:223px;height:26px;background:#e8e8e8"></div>
<div class="t dk" style="left: 941px; top: 484px; font-size: 11px; letter-spacing: 0.72px;">Hlltlbtl</div>
<div class="t" style="left:1131px;top:483px;font-size:10px;color:#aaa;font-weight:bold">5L</div>
<div class="a" style="left:941px;top:507px;width:199px;height:22px;background:#fff;border:1px solid #c8c8c8"></div>
<div class="a" style="left:946px;top:511px;width:12px;height:13px;background:#e6e6e6"></div>
<div class="t dk" style="left: 964px; top: 514px; font-size: 11px; letter-spacing: 0.17px;">Hllmtrltdl</div>
<svg class="a" style="left:1123px;top:514px" width="13" height="9"><path d="M1.5 1.5L6.5 6.5L11.5 1.5" stroke="#222" stroke-width="2" fill="none"></path></svg>
<div class="a" style="left:941px;top:529px;width:1px;height:197px;background:#d8d8d8"></div>
<div class="a" style="left:1139px;top:529px;width:1px;height:186px;background:#d8d8d8"></div>
<div class="a" style="left:942px;top:529px;width:197px;height:186px;background:#f3f3f3"></div>
<div class="a" style="left:942px;top:715px;width:122px;height:11px;background:#d2d2d2"></div>
<div class="a" style="left:1064px;top:715px;width:59px;height:11px;background:#fdfdfd"></div>
<div class="t" style="left:1129px;top:714px;font-size:9px;color:#666">•</div>
<div class="t" style="left:1144px;top:714px;font-size:9px;color:#888">o</div>
<div class="t" style="left:1144px;top:613px;font-size:9px;color:#666">•</div>
<div class="a" style="left:965px;top:536px;width:13px;height:13px;background:#fff;border:1px solid #8c8c8c"></div><div class="t dk" style="left: 985px; top: 536px; font-size: 12px; letter-spacing: 0.43px;">HHtltlt</div>
<div class="a" style="left:965px;top:554px;width:13px;height:13px;background:#fff;border:1px solid #8c8c8c"></div><div class="t dk" style="left: 985px; top: 554px; font-size: 12px; letter-spacing: -0.19px;">[Hlrllt&amp;kErrH]</div>
<div class="a" style="left:965px;top:572px;width:13px;height:13px;background:#fbefb8;border:1px solid #c9b070"></div><div class="a" style="left:970px;top:573px;width:7px;height:11px;background:#f6da70"></div><div class="t dk" style="left: 985px; top: 572px; font-size: 12px; letter-spacing: 0.67px;">Hltlttlt</div>
<div class="a" style="left:965px;top:590px;width:13px;height:13px;background:#2e8ce8;border:1px solid #1f78d0"></div><div class="a" style="left:968px;top:595px;width:6px;height:2px;background:#cfe6ff"></div><div class="t dk" style="left: 985px; top: 591px; font-size: 12px; letter-spacing: -0.37px;">lAHdnSlrT+l</div>
<div class="a" style="left:965px;top:608px;width:13px;height:13px;background:#2e8ce8;border:1px solid #1f78d0"></div><div class="a" style="left:968px;top:613px;width:6px;height:2px;background:#cfe6ff"></div><div class="t dk" style="left: 985px; top: 609px; font-size: 12px; letter-spacing: 0.67px;">Hltlttlt</div>
<div class="a" style="left:965px;top:626px;width:13px;height:13px;background:#fff;border:1px solid #8c8c8c"></div><div class="t dk" style="left: 985px; top: 627px; font-size: 12px; letter-spacing: 0.55px;">Hltltl</div>
<div class="a" style="left:965px;top:644px;width:13px;height:13px;background:#f6d36a;border:1px solid #c9a850"></div><div class="t dk" style="left: 985px; top: 645px; font-size: 12px; letter-spacing: 0.67px;">Hlbtl</div>
<div class="a" style="left:965px;top:663px;width:13px;height:13px;background:#f4f4f4;border:1px solid #d06060"></div><svg class="a" style="left:966px;top:664px" width="11" height="11"><path d="M2 10L10 2M5 10H10V5" stroke="#e04040" stroke-width="1.5" fill="none"></path></svg><div class="t dk" style="left: 985px; top: 664px; font-size: 12px; letter-spacing: -0.78px;">ElbtUl</div>
<div class="a" style="left:965px;top:681px;width:13px;height:13px;background:#e83030;border:1px solid #c02020"></div><div class="a" style="left:966px;top:682px;width:5px;height:6px;background:#f8a0a0"></div><div class="t dk" style="left: 985px; top: 681px; font-size: 12px; letter-spacing: 0.22px;">Hltltlltt</div>
<div class="a" style="left:965px;top:699px;width:13px;height:13px;background:#f6d36a;border:1px solid #c9a850"></div><div class="t dk" style="left: 985px; top: 699px; font-size: 12px; letter-spacing: 0.78px;">lHltbSJrTttl</div>

<div class="a" style="left:929px;top:729px;width:223px;height:1px;background:#d6d6d6"></div>
<div class="a" style="left:929px;top:730px;width:223px;height:26px;background:#e6e6e6"></div>
<div class="t dk" style="left: 941px; top: 739px; font-size: 11px; letter-spacing: 0.85px;">Hlltlbtl</div>
<div class="t" style="left:1131px;top:738px;font-size:10px;color:#aaa;font-weight:bold">5L</div>
<svg class="a" style="left:941px;top:764px" width="15" height="15"><path d="M1 6Q1 3 4 3L6 1H10L12 3Q14 3 14 6V12Q14 14 12 14H3Q1 14 1 12Z" fill="#3a9ee8"></path><path d="M4 5H11V12H4Z" fill="#8fd0ff" opacity="0.6"></path><path d="M7.5 6V11" stroke="#1a6ab8" stroke-width="1.5"></path></svg>
<svg class="a" style="left:965px;top:764px" width="11" height="15"><path d="M5.5 1L1 6V14H10V6Z" fill="#f2d67a" stroke="#333" stroke-width="1.2"></path></svg>
<div class="t dk" style="left: 983px; top: 768px; font-size: 11px; letter-spacing: 0.42px;">HTl</div>
<div class="a" style="left:999px;top:793px;width:62px;height:23px;background:#fff;border:1px solid #5a8ad0"></div>
<div class="t dk" style="left: 1018px; top: 799px; font-size: 11px; letter-spacing: 0.2px;">Hlkl</div>
<div class="a" style="left:1069px;top:793px;width:71px;height:23px;background:#2088e8"></div>
<div class="t" style="left: 1093px; top: 799px; font-size: 11px; font-weight: bold; color: rgb(232, 242, 255); letter-spacing: 0.04px;">Hlltl</div>
<div class="a" style="left:929px;top:821px;width:223px;height:1px;background:#dadada"></div>
<div class="t dk" style="left: 936px; top: 827px; font-size: 11px; letter-spacing: 0.63px;">D!ltrHltl</div>
<div id="status" class="a"></div>
<svg class="a" style="left:6px;top:844px" width="17" height="16"><path d="M8.5 15L2 8Q0 5 2 3Q5 0 8.5 4Q12 0 15 3Q17 5 15 8Z" fill="#f0a030"></path><path d="M5 7Q8.5 10 12 7" stroke="#c06010" stroke-width="1" fill="none"></path></svg>
<div class="t" style="left: 28px; top: 849px; font-size: 12px; color: rgb(26, 26, 26); letter-spacing: 0.17px;">Ordi JOb 6C7cet</div>
<svg class="a" style="left:837px;top:846px" width="15" height="15"><circle cx="7" cy="7" r="5.5" fill="none" stroke="#444" stroke-width="1.4"></circle><path d="M9 11L13 14" stroke="#444" stroke-width="1.4"></path></svg>
<svg class="a" style="left:876px;top:846px" width="15" height="14"><path d="M1 3H14V13H1Z" fill="#28b848"></path><path d="M1 3L4 1H8L9 3" fill="#28b848"></path><rect x="3" y="6" width="9" height="4" fill="#7ee090"></rect></svg>
<div class="t dk" style="left: 896px; top: 848px; font-size: 11px; letter-spacing: 1.56px;">Hfl%rft</div>
<div class="a" style="left:960px;top:842px;width:1px;height:22px;background:#d8d8d8"></div>
<div class="a" style="left:965px;top:843px;width:138px;height:21px;background:#dcdcdc"></div>
<div class="a" style="left:972px;top:847px;width:13px;height:11px;background:#f6b82a;border-radius:2px"></div>
<div class="t" style="left: 991px; top: 847px; font-size: 12px; color: rgb(34, 34, 34); font-weight: bold; letter-spacing: 0.83px;">56Rm</div>
<svg class="a" style="left:1073px;top:847px" width="13" height="12"><path d="M6.5 1V11M1 6H12" stroke="#222" stroke-width="1.8"></path></svg>
<div class="a" style="left:1106px;top:845px;width:16px;height:17px;background:#f8f8f8;border:1px solid #777"></div>
<div class="a" style="left:1110px;top:849px;width:1px;height:9px;background:#444"></div>
<div class="a" style="left:1110px;top:858px;width:8px;height:1px;background:#444"></div>
<div class="t dk" style="left: 1129px; top: 848px; font-size: 11px; letter-spacing: 0.11px;">Htl</div>

</body></html>
